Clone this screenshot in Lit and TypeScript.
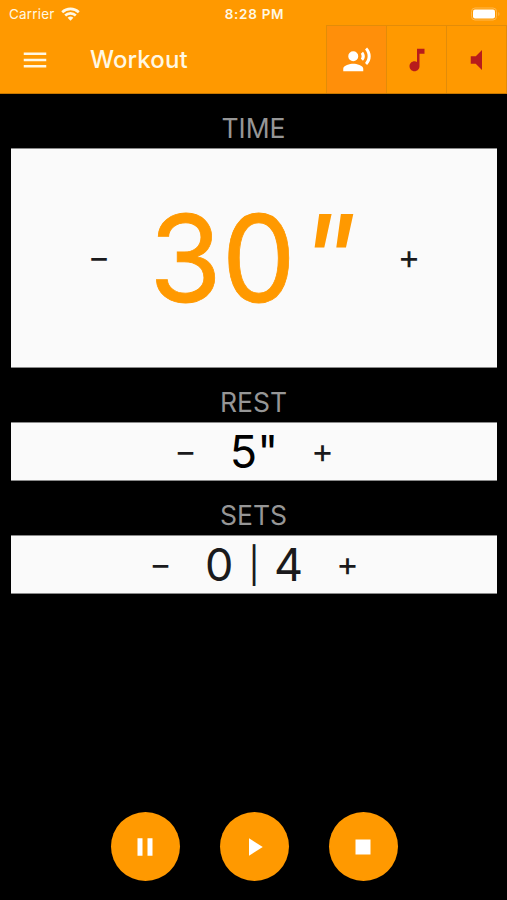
import { LitElement, html, css, svg, TemplateResult } from "lit";
import { customElement, property } from "lit/decorators.js";

const ICONS: Record<string, string> = {
  menu: "M3 18h18v-2H3v2zm0-5h18v-2H3v2zm0-7v2h18V6H3z",
  voice:
    "M5 9a4 4 0 1 0 8 0a4 4 0 1 0-8 0zM9 15c-2.67 0-8 1.34-8 4v2h16v-2c0-2.66-5.33-4-8-4zm7.76-9.64l-1.68 1.69c.84 1.18.84 2.71 0 3.89l1.68 1.69c2.02-2.02 2.02-5.07 0-7.27zM20.07 2l-1.63 1.63c2.77 3.02 2.77 7.56 0 10.74L20.07 16c3.9-3.89 3.91-9.95 0-14z",
  music: "M12 3v10.55c-.59-.34-1.27-.55-2-.55-2.21 0-4 1.79-4 4s1.79 4 4 4 4-1.79 4-4V7h4V3h-6z",
  mute: "M7 9v6h4l5 5V4l-5 5H7z",
  pause: "M6 19h4V5H6v14zm8-14v14h4V5h-4z",
  play: "M8 5v14l11-7z",
  stop: "M6 6h12v12H6z",
};

@customElement("app-icon")
export class AppIcon extends LitElement {
  @property() name = "menu";

  static styles = css`
    :host { display: block; width: 30px; height: 30px; }
    svg { display: block; width: 100%; height: 100%; fill: currentColor; }
  `;

  render() {
    return html`<svg viewBox="0 0 24 24">${svg`<path d=${ICONS[this.name]}></path>`}</svg>`;
  }
}

@customElement("value-panel")
export class ValuePanel extends LitElement {
  @property() label = "";

  static styles = css`
    :host { display: block; }
    .label {
      height: 54px;
      box-sizing: border-box;
      padding-top: 14px;
      text-align: center;
      font-size: 26.5px;
      line-height: 40px;
      color: #969696;
    }
    .panel {
      box-sizing: border-box;
      height: var(--panel-height, 59px);
      margin: 0 10px 0 11px;
      background: #fafafa;
      border: 1px solid #8a8a8a;
      border-width: 1px 0;
      display: flex;
      align-items: center;
      justify-content: center;
      color: #1a1a1c;
    }
    .step {
      width: 30px;
      padding: 0 0 2px;
      border: 0;
      background: none;
      font: 400 34px/30px Inter, sans-serif;
      color: inherit;
      text-align: center;
    }
    .value {
      width: var(--value-width, 107px);
      display: flex;
      align-items: center;
      justify-content: center;
      white-space: pre;
      font-size: var(--value-size, 45px);
      line-height: 1;
      color: var(--value-color, #1a1a1c);
    }
  `;

  render() {
    return html`
      <div class="label">${this.label}</div>
      <div class="panel">
        <button class="step">−</button>
        <div class="value"><slot></slot></div>
        <button class="step">+</button>
      </div>
    `;
  }
}

@customElement("app-root")
export class AppRoot extends LitElement {
  static styles = css`
    :host {
      display: flex;
      flex-direction: column;
      height: 900px;
      box-sizing: border-box;
      overflow: hidden;
      background: #000;
      font-family: Inter, "Liberation Sans", sans-serif;
    }
    .top { background: #ff9900; color: #fff8e4; height: 94px; flex: none; box-sizing: border-box; border-bottom: 1px solid #c87800; }
    .status { display: grid; grid-template-columns: 1fr auto 1fr; align-items: center; height: 25px; padding: 2px 6px 0 9px; box-sizing: border-box; font-size: 13px; }
    .carrier { display: flex; align-items: center; gap: 6px; font-size: 13.5px; letter-spacing: 0.2px; }
    .clock { font-weight: 600; font-size: 13.5px; letter-spacing: 0.7px; margin-right: 1px; }
    .wifi { width: 19px; height: 14px; }
    .battery { justify-self: end; width: 30px; height: 14px; }
    .bar { display: flex; align-items: center; height: 68px; }
    .menu { margin-left: 20px; margin-top: 1px; }
    .title { margin-left: 40px; font-size: 24px; font-weight: 500; letter-spacing: 0.1px; }
    .tools { margin-left: auto; display: flex; height: 100%; box-sizing: border-box; border: 1px solid #e38c08; border-bottom: 0; width: 181px; }
    .tool { flex: 1; display: flex; align-items: center; justify-content: center; color: #b71c1c; }
    .tool + .tool { border-left: 1px solid #e38c08; }
    .active { background: #ff8f0a; color: #fff; }
    .time { --panel-height: 220px; --value-size: 121px; --value-width: 280px; --value-color: #ff9900; }
    .rest { --value-color: #000; }
    .sets { --value-width: 157px; }
    .minutes { -webkit-text-stroke: 0.8px #ff9900; transform: scaleX(0.97); }
    .seconds { font-style: italic; margin: 0 8px 0 -2px; transform: scaleX(1.08); transform-origin: left; }
    .bar-mark { font-size: 35px; margin: 0 14px 0 15px; padding-top: 2px; }
    .controls { margin-top: auto; padding-bottom: 19px; display: flex; justify-content: center; gap: 40px; padding-left: 1px; }
    .round { width: 69px; height: 69px; border-radius: 50%; background: #ff9900; color: #fff; display: flex; align-items: center; justify-content: center; }
  `;

  private panel(kind: string, label: string, value: TemplateResult) {
    return html`<value-panel class=${kind} label=${label}>${value}</value-panel>`;
  }

  render() {
    return html`
      <header class="top">
        <div class="status">
          <span class="carrier">Carrier
            <svg class="wifi" viewBox="0 0 19 14" fill="none" stroke="#fff8e4" stroke-width="2.6">
              <path d="M1.2 5.2a12 12 0 0 1 16.6 0M4.2 8.5a7.6 7.6 0 0 1 10.6 0"></path>
              <path d="M6.6 10.8a4.3 4.3 0 0 1 5.8 0L9.5 13.8z" fill="#fff8e4" stroke="none"></path>
            </svg>
          </span>
          <span class="clock">8:28 PM</span>
          <svg class="battery" viewBox="0 0 30 14">
            <rect x="0.5" y="1" width="25" height="12" rx="3.5" fill="none" stroke="#ffb84d"></rect>
            <rect x="2" y="2.5" width="22" height="9" rx="2" fill="#fff"></rect>
            <path d="M27.3 5v4a2.3 2.3 0 0 0 0-4z" fill="#ffb84d"></path>
          </svg>
        </div>
        <div class="bar">
          <app-icon class="menu" name="menu"></app-icon>
          <span class="title">Workout</span>
          <div class="tools">
            <div class="tool active"><app-icon name="voice"></app-icon></div>
            <div class="tool"><app-icon name="music"></app-icon></div>
            <div class="tool"><app-icon name="mute"></app-icon></div>
          </div>
        </div>
      </header>
      ${this.panel("time", "TIME", html`<span class="minutes">30</span><span class="seconds">"</span>`)}
      ${this.panel("rest", "REST", html`<span>5"</span>`)}
      ${this.panel("sets", "SETS", html`<span>0</span><span class="bar-mark">|</span><span>4</span>`)}
      <footer class="controls">
        <div class="round"><app-icon name="pause"></app-icon></div>
        <div class="round"><app-icon name="play"></app-icon></div>
        <div class="round"><app-icon name="stop"></app-icon></div>
      </footer>
    `;
  }
}
